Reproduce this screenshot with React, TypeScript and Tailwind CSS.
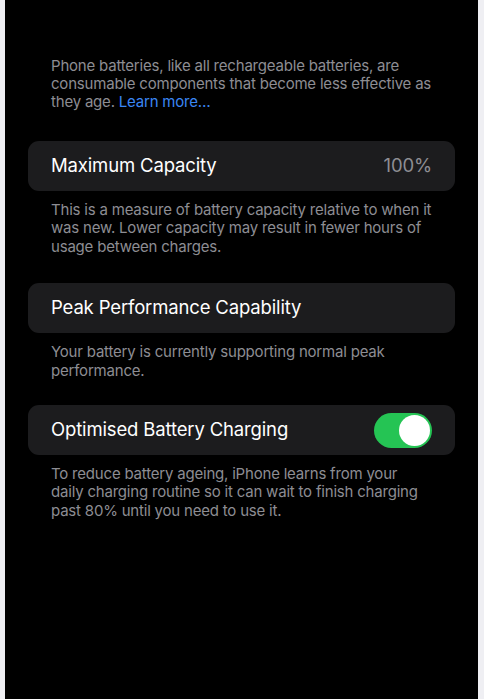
import type { ReactNode } from "react";

function Card({ children }: { children: ReactNode }) {
  return (
    <div className="flex h-[50px] items-center justify-between rounded-[11px] bg-[#1c1c1e] pl-[23px] pr-[23px]">
      {children}
    </div>
  );
}

function Note({ children, narrow = false }: { children: ReactNode; narrow?: boolean }) {
  return (
    <p
      className={`mt-[10px] pl-[23px] text-[15px] leading-[18.4px] tracking-[-0.2px] text-[#8d8d93] ${
        narrow ? "pr-[28px]" : "pr-[20px]"
      }`}
    >
      {children}
    </p>
  );
}

function Toggle() {
  return (
    <div className="flex h-[35px] w-[58px] items-center justify-end rounded-full bg-[#25c454] pr-[2px]">
      <div className="h-[31px] w-[31px] rounded-full bg-white" />
    </div>
  );
}

export default function App() {
  return (
    <div
      className="flex h-[699px] w-full bg-[#efeff3] pl-[5px] pr-[6px]"
      style={{ fontFamily: "Inter, 'Noto Sans', sans-serif" }}
    >
      <div className="flex-1 bg-black px-[23px] pt-[57px]">
        <p className="pl-[23px] pr-[20px] text-[15px] leading-[18px] tracking-[-0.2px] text-[#8d8d93]">
          Phone batteries, like all rechargeable batteries, are consumable components that become
          less effective as they age. <span className="text-[#3a86f4]">Learn more…</span>
        </p>

        <div className="mt-[30px]">
          <Card>
            <span className="text-[18.5px] tracking-[-0.15px] text-white">Maximum Capacity</span>
            <span className="text-[18.5px] tracking-[-0.15px] text-[#8e8e93]">100%</span>
          </Card>
          <Note>
            This is a measure of battery capacity relative to when it was new. Lower capacity may
            result in fewer hours of usage between charges.
          </Note>
        </div>

        <div className="mt-[27px]">
          <Card>
            <span className="text-[18.5px] tracking-[-0.15px] text-white">Peak Performance Capability</span>
          </Card>
          <Note>Your battery is currently supporting normal peak performance.</Note>
        </div>

        <div className="mt-[25px]">
          <Card>
            <span className="text-[18.5px] tracking-[-0.15px] text-white">Optimised Battery Charging</span>
            <Toggle />
          </Card>
          <Note narrow>
            To reduce battery ageing, iPhone learns from your daily charging routine so it can wait
            to finish charging past 80% until you need to use it.
          </Note>
        </div>
      </div>
    </div>
  );
}
